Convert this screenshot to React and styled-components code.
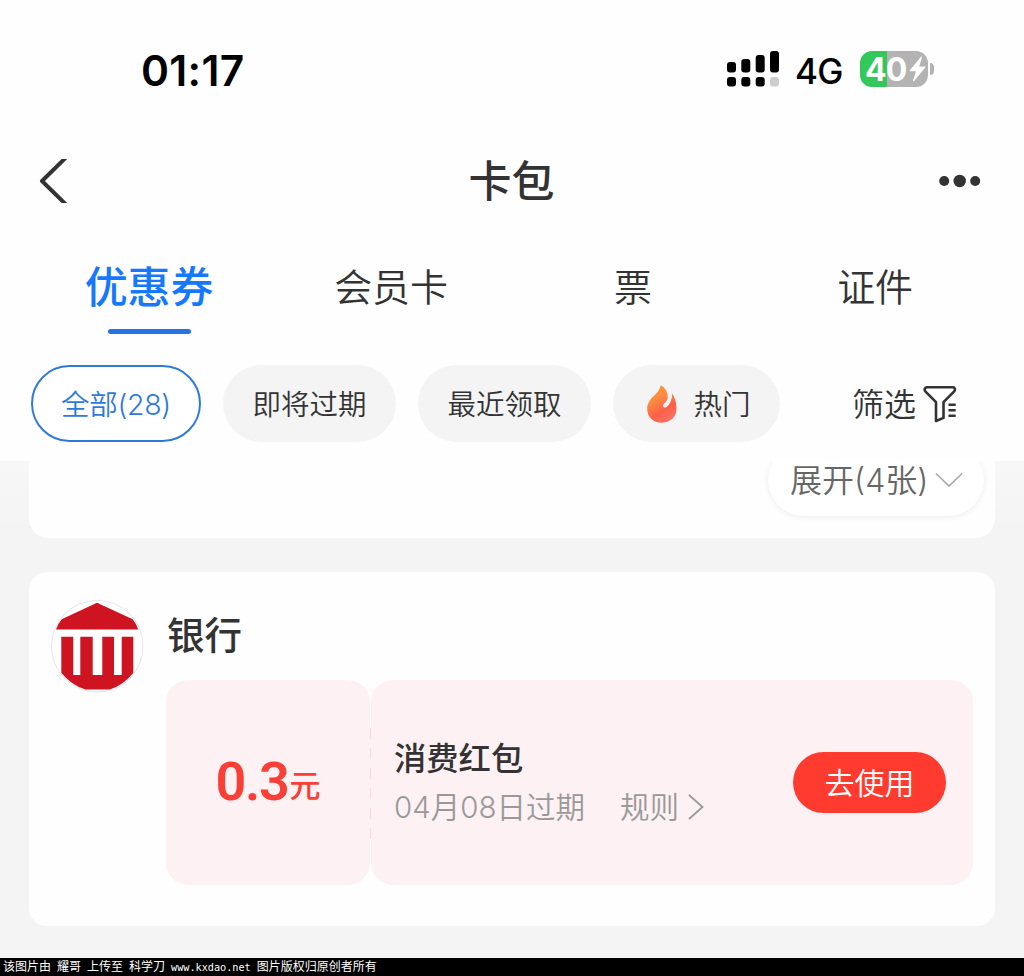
import React from 'react';
import styled, { createGlobalStyle, css } from 'styled-components';

const tabs = ['优惠券', '会员卡', '票', '证件'];

const chips = [
  { label: '全部(28)', width: 170, active: true },
  { label: '即将过期', width: 173 },
  { label: '最近领取', width: 173 },
  { label: '热门', width: 167, hot: true },
];

const SignalIcon = () => (
  <svg width="52" height="36" viewBox="0 0 52 36">
    <rect x="0" y="11" width="9" height="10.5" rx="3" />
    <rect x="14.3" y="8" width="9" height="13.5" rx="3" />
    <rect x="28.7" y="4" width="9" height="17.5" rx="3" />
    <rect x="43" y="0" width="9" height="21.5" rx="3" />
    <rect x="0" y="26" width="9" height="9.6" rx="3" />
    <rect x="14.3" y="26" width="9" height="9.6" rx="3" />
    <rect x="28.7" y="26" width="9" height="9.6" rx="3" />
    <rect x="43" y="26" width="9" height="9.6" rx="3" fill="#cdcdcd" />
  </svg>
);

const BoltIcon = () => (
  <svg width="17" height="26" viewBox="0 0 17 26">
    <path
      d="M11.8.9.9 14.2c-.4.5-.1 1.100.5 1.100h5.500L4.100 24.400c-.3.900.5 1.200 1 .6L16.100 11.700c.4-.5.1-1.100-.5-1.100h-5.400L12.900 1.500c.2-.9-.6-1.200-1.100-.6z"
      fill="#fff"
    />
  </svg>
);

const BackIcon = () => (
  <svg width="29" height="44" viewBox="0 0 29 44">
    <path
      d="M29-2.500 4 22l25 24.500"
      fill="none"
      stroke="#333"
      strokeWidth="4"
      strokeLinejoin="round"
    />
  </svg>
);

const MoreIcon = () => (
  <svg width="42" height="14" viewBox="0 0 42 14" fill="#333">
    <circle cx="5.2" cy="7" r="5" />
    <circle cx="20.7" cy="7" r="6.2" />
    <circle cx="36.2" cy="7" r="5" />
  </svg>
);

const FlameIcon = () => (
  <svg width="36" height="42" viewBox="0 0 36 42">
    <defs>
      <linearGradient id="flame" x1="0.2" y1="0.1" x2="0.6" y2="0.9">
        <stop offset="0" stopColor="#ff9838" />
        <stop offset="0.35" stopColor="#ff8840" />
        <stop offset="0.75" stopColor="#fb6148" />
        <stop offset="1" stopColor="#ff6a5c" />
      </linearGradient>
    </defs>
    <path
      d="M16.7 2.200c4.600 2.300 7 6.800 7 11.600 0 3.200-1.600 5.100-3.800 7-1.300 1.200-1.300 2.600-.2 3.400.9.700 2.300.4 3.500-.7 3.200-2.900 5.200-7.800 4.700-13.300 3 3.800 4.600 9.600 4.600 15.400 0 8.400-6 14.100-14.700 14.100S3.200 34 3.200 25.700c0-5 2.600-8.800 6.300-12.400 3.600-3.500 6.300-6.500 7.200-11.100z"
      fill="url(#flame)"
    />
  </svg>
);

const FilterIcon = () => (
  <svg
    width="35"
    height="38"
    viewBox="0 0 35 38"
    fill="none"
    stroke="#333"
    strokeWidth="2.6"
    strokeLinejoin="round"
  >
    <path d="M4 2.300h26c2 0 2.500 2.700 1.200 4L20.500 17.200v15.700L13 36V17.200L2.300 6.300c-1.300-1.300-.6-4 1.700-4z" />
    <path d="M25.500 19.700h7.200M25.500 25.300h7.200M25.500 30.800h7.200" />
  </svg>
);

const ChevronDown = () => (
  <svg width="28" height="16" viewBox="0 0 28 16">
    <path d="M1 1.500 14 14 27 1.500" fill="none" stroke="#aaa" strokeWidth="1.7" />
  </svg>
);

const ChevronRight = () => (
  <svg width="17" height="26" viewBox="0 0 17 26">
    <path d="M2 1 15.500 13 2 25" fill="none" stroke="#999" strokeWidth="1.8" />
  </svg>
);

const BankLogo = () => (
  <svg width="93" height="93" viewBox="0 0 93 93">
    <circle cx="46.3" cy="46.2" r="45.8" fill="#fff" stroke="#e6e6e8" />
    <path
      d="M46 2.700 81.700 19.300Q85.500 24 87.300 29.500H5Q6.800 24 10.700 19.300z"
      fill="#ce1321"
    />
    <path
      d="M10.300 36.700h12V75h7V36.700h12.400V75h9.600V36.700H63V75h7.700V36.700h11.600v36Q73 85 58.500 89.500h-24Q20 85 10.300 72.700z"
      fill="#ce1321"
    />
  </svg>
);

const App = () => {
  return (
    <Page>
      <GlobalStyle />
      <Header>
        <StatusBar>
          <Time>01:17</Time>
          <StatusIcons>
            <SignalIcon />
            <Network>4G</Network>
            <Battery>
              <Level>
                <span>40</span>
                <BoltIcon />
              </Level>
              <Nub />
            </Battery>
          </StatusIcons>
        </StatusBar>
        <NavBar>
          <BackIcon />
          <h1>卡包</h1>
          <MoreIcon />
        </NavBar>
        <Tabs>
          {tabs.map((tab, index) => (
            <Tab key={tab} $active={index === 0}>
              {tab}
            </Tab>
          ))}
        </Tabs>
        <Filters>
          {chips.map(({ label, width, active, hot }) => (
            <Chip key={label} $width={width} $active={active}>
              {hot && <FlameIcon />}
              <span>{label}</span>
            </Chip>
          ))}
          <FilterButton>
            <span>筛选</span>
            <FilterIcon />
          </FilterButton>
        </Filters>
      </Header>
      <Content>
        <PreviousCard>
          <Expand>
            <span>展开(4张)</span>
            <ChevronDown />
          </Expand>
        </PreviousCard>
        <Card>
          <BankLogo />
          <CardBody>
            <h2>银行</h2>
            <Coupon>
              <Amount>
                <strong>0.3</strong>
                <span>元</span>
              </Amount>
              <Perforation />
              <Details>
                <Info>
                  <h3>消费红包</h3>
                  <Meta>
                    <Expiry>04月08日过期</Expiry>
                    <Rules>
                      规则
                      <ChevronRight />
                    </Rules>
                  </Meta>
                </Info>
                <UseButton type="button">去使用</UseButton>
              </Details>
            </Coupon>
          </CardBody>
        </Card>
      </Content>
      <Watermark>
        该图片由 耀哥 上传至 科学刀 <b>www.kxdao.net</b> 图片版权归原创者所有
      </Watermark>
    </Page>
  );
};

const GlobalStyle = createGlobalStyle`
  * {
    box-sizing: border-box;
    margin: 0;
    padding: 0;
  }
  body {
    background: #fff;
    color: #333;
    font-family: Inter, 'Noto Sans CJK SC', sans-serif;
    font-weight: 350;
  }
  svg {
    display: block;
    flex-shrink: 0;
  }
`;

const Page = styled.div`
  width: 1024px;
  height: 976px;
  display: flex;
  flex-direction: column;
  overflow: hidden;
`;

const Header = styled.header`
  height: 461px;
  flex-shrink: 0;
  background: #fefefe;
`;

const StatusBar = styled.div`
  height: 138px;
  padding: 0 90px 0 141px;
  display: flex;
  align-items: center;
  justify-content: space-between;
  color: #000;
`;

const Time = styled.div`
  font-size: 42.5px;
  font-weight: 600;
  line-height: 50px;
  letter-spacing: 0.3px;
  margin-top: 3px;
`;

const StatusIcons = styled.div`
  display: flex;
  align-items: center;
`;

const Network = styled.span`
  width: 65px;
  margin: 3px 0 0 16px;
  font-size: 35px;
  font-weight: 450;
  line-height: 40px;
  letter-spacing: -0.8px;
`;

const Battery = styled.div`
  display: flex;
  align-items: center;
  gap: 2px;
`;

const Level = styled.div`
  width: 68px;
  height: 36px;
  padding-left: 5px;
  display: flex;
  align-items: center;
  gap: 2px;
  border-radius: 12px;
  background: linear-gradient(to right, #34c759 27px, #b3b3b3 27px);
  color: #fff;
  span {
    padding-top: 1px;
    font-size: 32px;
    font-weight: 700;
    line-height: 36px;
    letter-spacing: -0.8px;
  }
`;

const Nub = styled.div`
  width: 4px;
  height: 12px;
  border-radius: 0 5px 5px 0;
  background: #b3b3b3;
`;

const NavBar = styled.nav`
  height: 86px;
  padding: 0 43px 0 38px;
  display: grid;
  grid-template-columns: 1fr auto 1fr;
  align-items: center;
  h1 {
    padding-left: 4px;
    font-size: 43px;
    font-weight: 500;
    line-height: 60px;
  }
  svg:last-child {
    justify-self: end;
  }
`;

const Tabs = styled.div`
  height: 141px;
  padding: 28px 28px 0;
  display: grid;
  grid-template-columns: repeat(4, 1fr);
`;

const Tab = styled.div`
  display: flex;
  flex-direction: column;
  align-items: center;
  font-size: 38px;
  line-height: 70px;
  letter-spacing: -0.2px;
  ${({ $active }) =>
    $active &&
    css`
      color: #1677ff;
      font-size: 43px;
      font-weight: 500;
      &::after {
        content: '';
        width: 83px;
        height: 5px;
        margin-top: 7px;
        border-radius: 3px;
        background: #2673e8;
      }
    `}
`;

const Filters = styled.div`
  height: 77px;
  padding: 0 66px 0 31px;
  display: flex;
  align-items: center;
  gap: 22px;
`;

const Chip = styled.div`
  width: ${({ $width }) => $width}px;
  height: 77px;
  display: flex;
  align-items: center;
  justify-content: center;
  gap: 13px;
  border-radius: 39px;
  background: ${({ $active }) => ($active ? '#fff' : '#f4f4f4')};
  border: ${({ $active }) => ($active ? '2px solid #2f79da' : 'none')};
  color: ${({ $active }) => ($active ? '#2f79da' : '#333')};
  font-size: 28.5px;
  line-height: 40px;
  letter-spacing: ${({ $active }) => ($active ? '-0.3px' : 'normal')};
  span {
    padding-top: 2px;
  }
  svg {
    margin-left: 2px;
  }
`;

const FilterButton = styled.div`
  margin-left: auto;
  display: flex;
  align-items: center;
  gap: 7px;
  font-size: 32px;
  line-height: 44px;
  span {
    padding-top: 2px;
  }
`;

const Content = styled.main`
  height: 497px;
  padding: 0 29px;
  overflow: hidden;
  background: linear-gradient(#f7f7f7, #f4f4f4 72px);
`;

// scrolled halfway under the header
const PreviousCard = styled.section`
  height: 117px;
  margin-top: -40px;
  padding: 0 11px 22px;
  display: flex;
  align-items: flex-end;
  justify-content: flex-end;
  border-radius: 20px;
  background: #fefefe;
`;

const Expand = styled.div`
  width: 216px;
  height: 72px;
  padding-left: 22px;
  display: flex;
  align-items: center;
  gap: 7px;
  border-radius: 36px;
  background: #fff;
  box-shadow: 0 1px 6px rgba(0, 0, 0, 0.07);
  color: #666;
  font-size: 32px;
  line-height: 44px;
  span {
    padding-top: 2px;
  }
`;

const Card = styled.section`
  height: 354px;
  margin-top: 33.5px;
  padding: 28px 22px 0;
  display: flex;
  gap: 22px;
  border-radius: 18px;
  background: #fefefe;
`;

const CardBody = styled.div`
  flex: 1;
  h2 {
    height: 80.5px;
    padding: 8px 0 0 1px;
    font-size: 37.5px;
    font-weight: 500;
    line-height: 56px;
  }
`;

const Coupon = styled.div`
  height: 204.5px;
  display: flex;
`;

const Amount = styled.div`
  width: 204px;
  display: flex;
  align-items: center;
  justify-content: center;
  gap: 1px;
  border-radius: 22px;
  background: #fef1f3;
  color: #f93f36;
  strong {
    font-family: Roboto, sans-serif;
    font-size: 54px;
    font-weight: 600;
    line-height: 60px;
    letter-spacing: -1.3px;
  }
  span {
    padding-top: 8px;
    font-size: 31px;
    font-weight: 500;
    line-height: 40px;
  }
`;

const Perforation = styled.div`
  width: 1px;
  height: 111px;
  margin: 48px 0 0;
  background: repeating-linear-gradient(
    #fbdbdf 0 11px,
    #fef1f3 11px 20px
  );
`;

const Details = styled.div`
  flex: 1;
  padding: 0 27px 0 23px;
  display: flex;
  align-items: center;
  justify-content: space-between;
  border-radius: 22px;
  background: #fef1f3;
`;

const Info = styled.div`
  h3 {
    padding-top: 2px;
    font-size: 32.3px;
    font-weight: 500;
    line-height: 48px;
  }
`;

const Meta = styled.div`
  display: flex;
  color: #999;
  font-size: 29.5px;
  line-height: 48px;
`;

const Expiry = styled.span`
  width: 226px;
`;

const Rules = styled.span`
  display: flex;
  align-items: center;
  gap: 8px;
`;

const UseButton = styled.button`
  width: 153px;
  height: 61px;
  padding-top: 2px;
  border: none;
  border-radius: 31px;
  background: #ff3b30;
  color: #fff;
  font-family: inherit;
  font-size: 30px;
  font-weight: 350;
  line-height: 59px;
`;

const Watermark = styled.footer`
  height: 18px;
  padding-left: 3px;
  background: #000;
  color: #fff;
  font-family: 'Liberation Mono', 'Noto Sans CJK SC', monospace;
  font-size: 12px;
  font-weight: 400;
  line-height: 20px;
  white-space: pre;
  word-spacing: -1.2px;
  b {
    font-family: 'DejaVu Sans Mono', monospace;
    font-size: 10.2px;
    font-weight: 400;
  }
`;

export default App;
